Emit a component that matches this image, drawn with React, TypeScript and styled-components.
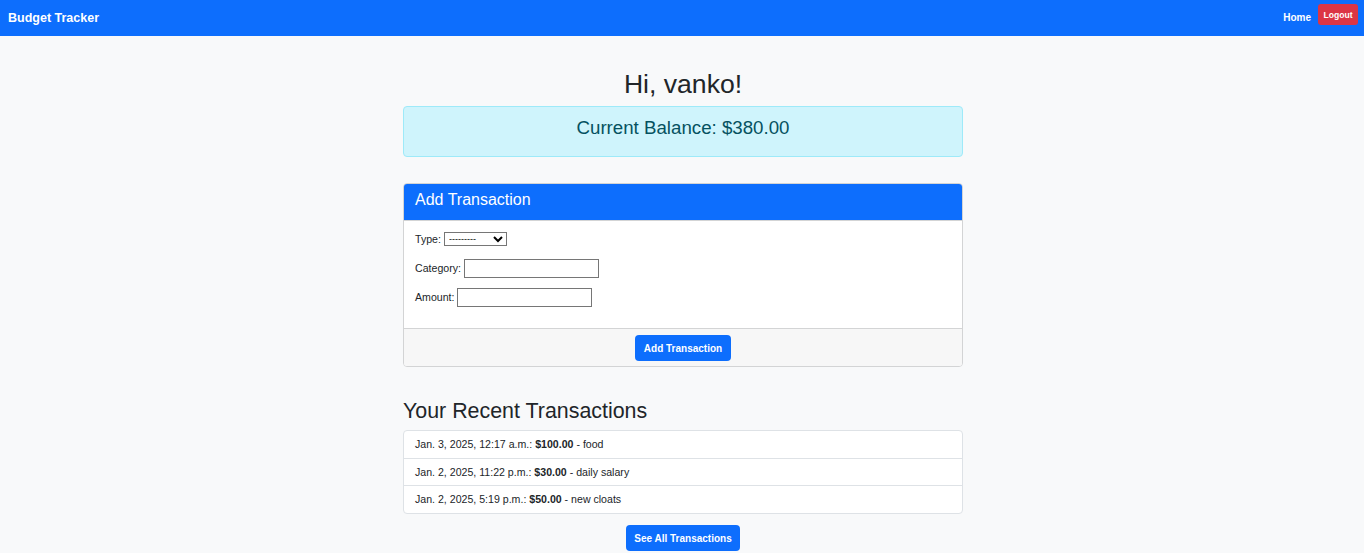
import React from "react";
import styled, { createGlobalStyle } from "styled-components";

const GlobalStyle = createGlobalStyle`
  html, body { margin: 0; padding: 0; }
  body {
    background: #f8f9fa;
    font-family: "Liberation Sans", Arial, sans-serif;
    color: #212529;
  }
  * { box-sizing: border-box; }
`;

const Navbar = styled.nav`
  height: 36px;
  background: #0d6efd;
  display: flex;
  align-items: flex-start;
  justify-content: space-between;
  padding: 0 6px 0 8px;
`;

const Brand = styled.a`
  color: #fff;
  font-weight: bold;
  font-size: 12.5px;
  line-height: 36px;
  text-decoration: none;
`;

const NavRight = styled.div`
  display: flex;
  align-items: flex-start;
  gap: 7px;
`;

const NavLink = styled.a`
  color: #fff;
  font-weight: bold;
  font-size: 10px;
  line-height: 36px;
  text-decoration: none;
`;

const LogoutButton = styled.button`
  margin-top: 4px;
  height: 21px;
  width: 40px;
  padding: 0;
  border: none;
  border-radius: 3px;
  background: #dc3545;
  color: #fff;
  font-family: inherit;
  font-weight: bold;
  font-size: 8.6px;
`;

const Page = styled.div`
  padding-left: 2px;
`;

const Container = styled.main`
  width: 560px;
  margin: 0 auto;
  padding-top: 32px;
  display: flex;
  flex-direction: column;
`;

const Greeting = styled.h2`
  margin: 0 0 6px;
  text-align: center;
  font-weight: normal;
  font-size: 26.6px;
  line-height: 32px;
  color: #212529;
`;

const Alert = styled.div`
  background: #cff4fc;
  border: 1px solid #9eeaf9;
  border-radius: 4px;
  color: #055160;
  text-align: center;
  font-size: 18.7px;
  line-height: 23px;
  padding: 9px 16px 17px;
  margin-bottom: 26px;
`;

const Card = styled.section`
  border: 1px solid #d3d4d5;
  border-radius: 4px;
  background: #fff;
  overflow: hidden;
  margin-bottom: 32px;
`;

const CardHeader = styled.div`
  background: #0d6efd;
  color: #fff;
  height: 37px;
  border-bottom: 1px solid #d3d4d5;
  padding: 0 11px 5px;
  display: flex;
  align-items: center;
  font-size: 16px;
`;

const CardBody = styled.form`
  padding: 9px 11px 22px;
  display: flex;
  flex-direction: column;
  gap: 11px;
  font-size: 10.6px;
`;

const FieldRow = styled.div`
  height: 18px;
  display: flex;
  align-items: center;
  gap: 3px;
`;

const Select = styled.select`
  width: 63px;
  height: 14px;
  font-size: 9px;
  font-family: inherit;
  border: 1px solid #767676;
  border-radius: 0;
  padding: 0;
  background: #fff;
  color: #000;
`;

const TextInput = styled.input`
  width: 135px;
  height: 19px;
  border: 1px solid #767676;
  border-radius: 0;
  padding: 0 2px;
  font-family: inherit;
`;

const CardFooter = styled.div`
  background: #f7f7f7;
  border-top: 1px solid #d3d4d5;
  padding: 6px 0 5px;
  display: flex;
  justify-content: center;
`;

const PrimaryButton = styled.button<{ $w: number }>`
  width: ${(p) => p.$w}px;
  height: 26px;
  padding: 0;
  border: none;
  border-radius: 4px;
  background: #0d6efd;
  color: #fff;
  font-family: inherit;
  font-weight: bold;
  font-size: 10px;
`;

const SectionTitle = styled.h3`
  margin: 0 0 7px;
  font-weight: normal;
  font-size: 21.4px;
  line-height: 24px;
  color: #212529;
`;

const List = styled.ul`
  list-style: none;
  margin: 0 0 11px;
  padding: 0;
  background: #fff;
  border: 1px solid #dee2e6;
  border-radius: 4px;
`;

const ListItem = styled.li`
  height: 27px;
  display: flex;
  align-items: center;
  padding: 0 11px 1px;
  font-size: 10.6px;
  color: #212529;
  & + & { border-top: 1px solid #dee2e6; }
  &:last-child { height: 28px; }
`;

const Center = styled.div`
  display: flex;
  justify-content: center;
`;

const transactions = [
  { date: "Jan. 3, 2025, 12:17 a.m.", amount: "$100.00", category: "food" },
  { date: "Jan. 2, 2025, 11:22 p.m.", amount: "$30.00", category: "daily salary" },
  { date: "Jan. 2, 2025, 5:19 p.m.", amount: "$50.00", category: "new cloats" },
];

export default function App() {
  return (
    <>
      <GlobalStyle />
      <Navbar>
        <Brand>Budget Tracker</Brand>
        <NavRight>
          <NavLink>Home</NavLink>
          <LogoutButton>Logout</LogoutButton>
        </NavRight>
      </Navbar>
      <Page>
        <Container>
          <Greeting>Hi, vanko!</Greeting>
          <Alert>Current Balance: $380.00</Alert>
          <Card>
            <CardHeader>Add Transaction</CardHeader>
            <CardBody>
              <FieldRow>
                <label>Type:</label>
                <Select defaultValue="">
                  <option value="">---------</option>
                  <option value="income">Income</option>
                  <option value="expense">Expense</option>
                </Select>
              </FieldRow>
              <FieldRow>
                <label>Category:</label>
                <TextInput type="text" />
              </FieldRow>
              <FieldRow>
                <label>Amount:</label>
                <TextInput type="text" />
              </FieldRow>
            </CardBody>
            <CardFooter>
              <PrimaryButton $w={96}>Add Transaction</PrimaryButton>
            </CardFooter>
          </Card>
          <SectionTitle>Your Recent Transactions</SectionTitle>
          <List>
            {transactions.map((t) => (
              <ListItem key={t.date}>
                {t.date}:&nbsp;<b>{t.amount}</b>&nbsp;- {t.category}
              </ListItem>
            ))}
          </List>
          <Center>
            <PrimaryButton $w={114}>See All Transactions</PrimaryButton>
          </Center>
        </Container>
      </Page>
    </>
  );
}
